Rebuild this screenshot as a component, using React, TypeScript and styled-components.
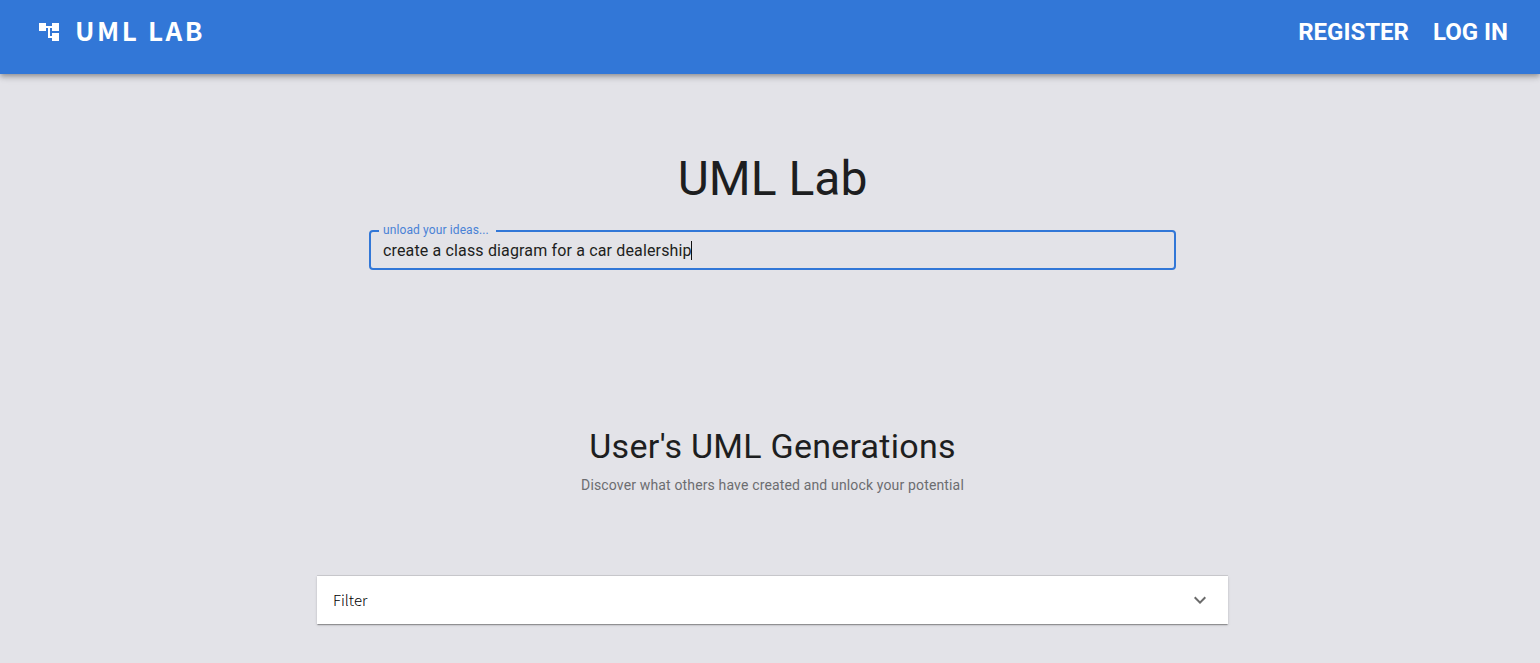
import React, { useState } from "react";
import styled, { createGlobalStyle } from "styled-components";

const GlobalStyle = createGlobalStyle`
  *, *::before, *::after { box-sizing: border-box; }
  body {
    margin: 0;
    min-height: 100vh;
    background: #e3e3e8;
    color: #1d1e20;
    font-family: Roboto, "Liberation Sans", sans-serif;
    font-size: 16px;
  }
`;

const Header = styled.header`
  display: flex;
  align-items: flex-start;
  justify-content: space-between;
  height: 74px;
  padding: 16px 32px 0 37px;
  background: #3277d7;
  color: #fff;
  box-shadow: 0 2px 4px -1px rgba(0, 0, 0, 0.2), 0 4px 5px rgba(0, 0, 0, 0.14),
    0 1px 10px rgba(0, 0, 0, 0.12);
`;

const Brand = styled.a`
  display: flex;
  align-items: center;
  gap: 14px;
  height: 32px;
  color: inherit;
  text-decoration: none;
`;

const BrandName = styled.span`
  padding-bottom: 4px;
  font-family: "Noto Sans CJK JP", "Noto Sans", sans-serif;
  font-size: 26px;
  font-weight: 700;
  line-height: 32px;
  letter-spacing: 0.1em;
`;

const Nav = styled.nav`
  display: flex;
  gap: 24px;
`;

const NavLink = styled.a`
  color: inherit;
  font-size: 24px;
  font-weight: 700;
  line-height: 32px;
  text-decoration: none;
`;

const Main = styled.main`
  display: flex;
  flex-direction: column;
  align-items: center;
  padding: 77px 16px 38px 21px;
`;

const Title = styled.h1`
  margin: 0 0 16px;
  font-size: 48px;
  font-weight: 400;
  line-height: 56px;
`;

const Field = styled.fieldset`
  width: 100%;
  max-width: 807px;
  height: 47px;
  margin: 0;
  padding: 0 12px;
  border: 2px solid #3277d7;
  border-radius: 4px;
`;

const FieldLabel = styled.legend`
  height: 16px;
  margin-left: -4px;
  padding: 0 7px 0 4px;
  color: #4a82d6;
  font-size: 12px;
  line-height: 14px;
  letter-spacing: 0.00938em;
`;

const Entry = styled.label`
  display: flex;
  align-items: center;
  height: 22px;
`;

const TextInput = styled.input`
  field-sizing: content;
  max-width: 100%;
  padding: 0;
  border: 0;
  outline: 0;
  background: transparent;
  color: inherit;
  caret-color: transparent;
  font: inherit;
  letter-spacing: 0.00938em;
`;

const Caret = styled.span`
  width: 1px;
  height: 19px;
  margin-left: -1px;
  background: #111;
`;

const Subtitle = styled.h2`
  margin: 155px 0 8px;
  font-size: 34px;
  font-weight: 400;
  line-height: 42px;
  letter-spacing: 0.00735em;
`;

const Lead = styled.p`
  margin: 0;
  color: #6c6d70;
  font-size: 14px;
  line-height: 20px;
  letter-spacing: 0.01071em;
`;

const Accordion = styled.button`
  display: flex;
  align-items: center;
  justify-content: space-between;
  width: 100%;
  max-width: 911px;
  height: 48px;
  margin-top: 81px;
  padding: 0 16px;
  border: 0;
  background: #fff;
  color: #000;
  font-family: "Noto Sans CJK JP", "Noto Sans", sans-serif;
  font-size: 15px;
  font-weight: 300;
  line-height: 24px;
  box-shadow: 0 -1px 0 rgba(0, 0, 0, 0.1), 0 2px 1px -1px rgba(0, 0, 0, 0.2),
    0 1px 1px rgba(0, 0, 0, 0.14), 0 1px 3px rgba(0, 0, 0, 0.12);
`;

export default function App() {
  const [idea, setIdea] = useState("create a class diagram for a car dealership");
  const [open, setOpen] = useState(false);
  return (
    <>
      <GlobalStyle />
      <Header>
        <Brand href="#">
          <svg width="24" height="24" viewBox="0 0 24 24" fill="currentColor" aria-hidden="true">
            <path d="M22 11V3h-7v3H9V3H2v8h7V8h2v10h4v3h7v-8h-7v3h-2V8h2v3z" />
          </svg>
          <BrandName>UML LAB</BrandName>
        </Brand>
        <Nav>
          <NavLink href="#register">REGISTER</NavLink>
          <NavLink href="#login">LOG IN</NavLink>
        </Nav>
      </Header>
      <Main>
        <Title>UML Lab</Title>
        <Field>
          <FieldLabel>unload your ideas...</FieldLabel>
          <Entry>
            <TextInput
              aria-label="unload your ideas..."
              value={idea}
              onChange={(e) => setIdea(e.target.value)}
            />
            <Caret />
          </Entry>
        </Field>
        <Subtitle>User's UML Generations</Subtitle>
        <Lead>Discover what others have created and unlock your potential</Lead>
        <Accordion type="button" aria-expanded={open} onClick={() => setOpen(!open)}>
          Filter
          <svg width="24" height="24" viewBox="0 0 24 24" fill="#6b6b6b" aria-hidden="true">
            <path d="M16.59 8.59 12 13.17 7.41 8.59 6 10l6 6 6-6z" />
          </svg>
        </Accordion>
      </Main>
    </>
  );
}
